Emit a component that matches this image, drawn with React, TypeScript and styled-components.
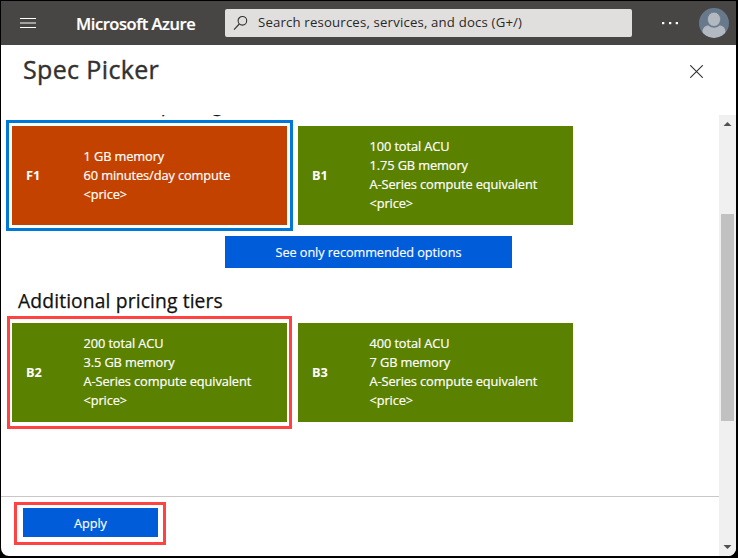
import React from "react";
import styled, { createGlobalStyle } from "styled-components";

const GlobalStyle = createGlobalStyle`
  * { box-sizing: border-box; }
  html, body { margin: 0; padding: 0; background: #000; overflow: hidden; }
  body { font-family: "Open Sans", "Noto Sans", sans-serif; }
  button { font: inherit; border: 0; margin: 0; }
`;

const Desktop = styled.div`
  width: 738px;
  height: 558px;
  padding: 1px 2px 2px 1px;
  background: #000;
`;

const Window = styled.div`
  width: 735px;
  height: 555px;
  display: flex;
  flex-direction: column;
  background: #fff;
  overflow: hidden;
  border-radius: 0 0 8px 8px;
`;

const TopBar = styled.header`
  height: 44px;
  flex: none;
  display: flex;
  align-items: center;
  background: #484644;
  color: #fff;
  padding: 0 7px 0 18px;
`;

const IconButton = styled.button`
  display: flex;
  flex: none;
  padding: 0;
  background: transparent;
`;

const Brand = styled.div`
  width: 149px;
  margin-left: 40px;
  padding-top: 1px;
  font-size: 16.5px;
  line-height: 22px;
  font-weight: 600;
  letter-spacing: -0.45px;
  -webkit-text-stroke: 0.2px #fff;
  white-space: nowrap;
`;

const SearchBox = styled.div`
  width: 407px;
  height: 28px;
  flex: none;
  display: flex;
  align-items: center;
  gap: 10px;
  padding-left: 8px;
  border-radius: 2px;
  background: #e1dfdd;
  color: #292827;
  font-size: 13.2px;
  letter-spacing: 0.17px;
  white-space: nowrap;
`;

const SearchText = styled.span`
  padding-bottom: 2px;
`;

const MoreButton = styled(IconButton)`
  margin-left: 29px;
`;

const Avatar = styled.svg`
  display: block;
  margin-left: auto;
`;

const TitleBar = styled.div`
  height: 70px;
  flex: none;
  display: flex;
  justify-content: space-between;
  padding: 7px 33px 0 22px;
`;

const Title = styled.h1`
  margin: 0;
  font-size: 25px;
  line-height: 34px;
  font-weight: 500;
  letter-spacing: 0.36px;
  -webkit-text-stroke: 0.4px #323130;
  color: #323130;
`;

const CloseButton = styled(IconButton)`
  align-self: flex-start;
  margin-top: 13px;
`;

const Body = styled.div`
  flex: 1;
  min-height: 0;
  display: flex;
`;

const Main = styled.div`
  flex: 1;
  min-width: 0;
  display: flex;
  flex-direction: column;
`;

const Scroller = styled.main`
  height: 381px;
  flex: none;
  overflow: hidden;
`;

const SectionTitle = styled.h2<{ $clipped?: boolean }>`
  margin: ${(p) => (p.$clipped ? "-25px 0 0 17px" : "18px 0 0 17px")};
  height: 30px;
  font-size: 19.3px;
  line-height: ${(p) => (p.$clipped ? "28px" : "29px")};
  font-weight: 500;
  letter-spacing: 0.12px;
  -webkit-text-stroke: 0.25px #111;
  color: #111;
  white-space: nowrap;
`;

const TierRow = styled.div`
  display: flex;
  gap: 5px;
  align-items: center;
`;

const TierFrame = styled.div<{ $kind: "selected" | "marked" | "plain" }>`
  flex: none;
  border: 3px solid
    ${(p) => ({ selected: "#0078d7", marked: "#ff4343", plain: "transparent" })[p.$kind]};
  padding: ${(p) => (p.$kind === "marked" ? "4px 2px" : "3px")};
  margin-left: ${(p) => ({ selected: "5px", marked: "6px", plain: "0" })[p.$kind]};
  margin-right: ${(p) => ({ selected: "-6px", marked: "-5px", plain: "0" })[p.$kind]};
`;

const TierCard = styled.div<{ $color: string }>`
  width: 275px;
  height: 99px;
  display: grid;
  grid-template-columns: 57.5px 1fr;
  align-items: center;
  padding-left: 14px;
  background: ${(p) => p.$color};
  color: #fff;
  font-size: 12.8px;
`;

const TierCode = styled.strong`
  font-weight: 700;
  padding-bottom: 2px;
`;

const TierSpecs = styled.ul<{ $lines: number }>`
  list-style: none;
  margin: 0;
  padding: 0 0 ${(p) => (p.$lines > 3 ? 2 : 0)}px;
  line-height: 19px;
  letter-spacing: -0.1px;
  -webkit-text-stroke: 0.2px #fff;
  white-space: nowrap;
`;

const PrimaryButton = styled.button<{ $width: number; $height: number }>`
  display: block;
  width: ${(p) => p.$width}px;
  height: ${(p) => p.$height}px;
  padding: 0;
  background: #015cda;
  color: #fff;
  font-size: 12.7px;
  line-height: 18px;
  letter-spacing: -0.07px;
  -webkit-text-stroke: 0.15px #fff;
`;

const ToggleRow = styled.div`
  padding: 5px 0 0 224px;
`;

const Footer = styled.footer`
  flex: 1;
  border-top: 1px solid #c8c8c8;
  padding: 5px 0 0 13px;
`;

const ApplyFrame = styled.div`
  width: 152px;
  height: 43px;
  border: 3px solid #ff4343;
  padding: 3px 0 0 6px;
`;

const ApplyButton = styled(PrimaryButton)`
  padding-top: 1px;
`;

const Scrollbar = styled.div`
  width: 17px;
  flex: none;
  display: flex;
  flex-direction: column;
  align-items: center;
  background: #f0f0f0;
`;

const Arrow = styled.svg`
  display: block;
  flex: none;
`;

const Thumb = styled.div`
  width: 13px;
  height: 207px;
  margin-top: 82px;
  margin-bottom: auto;
  background: #c1c1c1;
`;

type Tier = {
  code: string;
  color: string;
  kind: "selected" | "marked" | "plain";
  specs: string[];
};

const ORANGE = "#c44200";
const GREEN = "#5a8100";

const recommended: Tier[] = [
  { code: "F1", color: ORANGE, kind: "selected", specs: ["1 GB memory", "60 minutes/day compute", "<price>"] },
  { code: "B1", color: GREEN, kind: "plain", specs: ["100 total ACU", "1.75 GB memory", "A-Series compute equivalent", "<price>"] },
];

const additional: Tier[] = [
  { code: "B2", color: GREEN, kind: "marked", specs: ["200 total ACU", "3.5 GB memory", "A-Series compute equivalent", "<price>"] },
  { code: "B3", color: GREEN, kind: "plain", specs: ["400 total ACU", "7 GB memory", "A-Series compute equivalent", "<price>"] },
];

function Tiers({ tiers }: { tiers: Tier[] }) {
  return (
    <TierRow>
      {tiers.map((t) => (
        <TierFrame key={t.code} $kind={t.kind}>
          <TierCard $color={t.color}>
            <TierCode>{t.code}</TierCode>
            <TierSpecs $lines={t.specs.length}>
              {t.specs.map((s) => (
                <li key={s}>{s}</li>
              ))}
            </TierSpecs>
          </TierCard>
        </TierFrame>
      ))}
    </TierRow>
  );
}

export default function App() {
  return (
    <>
      <GlobalStyle />
      <Desktop>
        <Window>
          <TopBar>
            <IconButton aria-label="Menu">
              <svg width="17" height="12" viewBox="0 0 17 12" shapeRendering="crispEdges">
                <path d="M1 1.5H17M1 10.5H17" stroke="#fff" />
                <path d="M1 6H17" stroke="#a3a2a1" strokeWidth="2" />
              </svg>
            </IconButton>
            <Brand>Microsoft Azure</Brand>
            <SearchBox>
              <svg width="15" height="16" viewBox="0 0 15 16" fill="none" stroke="#323130" strokeWidth="1.1">
                <circle cx="9.4" cy="5.8" r="4.3" />
                <path d="M6.3 9L1 14.6" />
              </svg>
              <SearchText>Search resources, services, and docs (G+/)</SearchText>
            </SearchBox>
            <MoreButton aria-label="More">
              <svg width="18" height="4" viewBox="0 0 18 4" fill="#fff">
                <rect x="1" y="1" width="2.3" height="2.2" />
                <rect x="8" y="1" width="2.3" height="2.2" />
                <rect x="14.7" y="1" width="2.3" height="2.2" />
              </svg>
            </MoreButton>
            <Avatar width="30" height="30" viewBox="0 0 30 30">
              <clipPath id="avatar">
                <circle cx="15" cy="15" r="15" />
              </clipPath>
              <g clipPath="url(#avatar)">
                <rect width="30" height="30" fill="#68798c" />
                <path d="M3.5 24C3.5 20 6 17.5 9.5 17.5C13 20.5 17 20.5 20.5 17.5C24 17.5 26.5 20 26.5 24V25C23 28.5 19 30 15 30S7 28.5 3.5 25Z" fill="#b2b9c1" />
                <ellipse cx="15" cy="11.3" rx="6.6" ry="7.2" fill="#b2b9c1" stroke="#68798c" strokeWidth="0.9" />
              </g>
            </Avatar>
          </TopBar>
          <TitleBar>
            <Title>Spec Picker</Title>
            <CloseButton aria-label="Close">
              <svg width="13" height="13" viewBox="0 0 13 13" stroke="#323130" strokeWidth="1.1">
                <path d="M0.2 0.2L12.8 12.8M12.8 0.2L0.2 12.8" />
              </svg>
            </CloseButton>
          </TitleBar>
          <Body>
            <Main>
              <Scroller>
                <SectionTitle $clipped>Recommended pricing tiers</SectionTitle>
                <Tiers tiers={recommended} />
                <ToggleRow>
                  <PrimaryButton $width={287} $height={32}>See only recommended options</PrimaryButton>
                </ToggleRow>
                <SectionTitle>Additional pricing tiers</SectionTitle>
                <Tiers tiers={additional} />
              </Scroller>
              <Footer>
                <ApplyFrame>
                  <ApplyButton $width={135} $height={29}>Apply</ApplyButton>
                </ApplyFrame>
              </Footer>
            </Main>
            <Scrollbar>
              <Arrow width="17" height="17" viewBox="0 0 17 17">
                <path d="M4.5 11L8.5 7L12.5 11Z" fill="#505050" />
              </Arrow>
              <Thumb />
              <Arrow width="17" height="17" viewBox="0 0 17 17">
                <path d="M4.5 6L8.5 10L12.5 6Z" fill="#505050" />
              </Arrow>
            </Scrollbar>
          </Body>
        </Window>
      </Desktop>
    </>
  );
}
